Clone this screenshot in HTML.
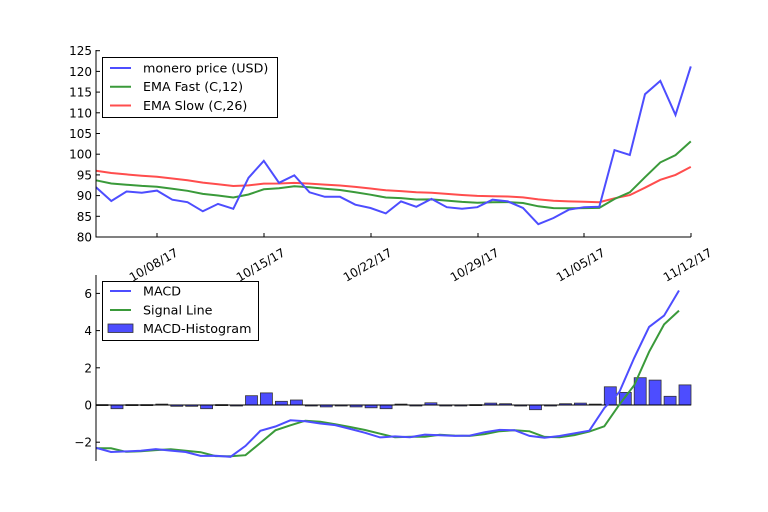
<!DOCTYPE html>
<html><head><meta charset="utf-8">
<style>
html,body{margin:0;padding:0;background:#fff;}
svg{display:block;font-family:"DejaVu Sans","Liberation Sans",sans-serif;}
</style></head>
<body>
<svg id="s" width="768" height="512" xmlns="http://www.w3.org/2000/svg"></svg>
<script>
var P=[92,88.7,91,90.7,91.2,89,88.4,86.2,88,86.8,94.3,98.4,93.1,94.9,90.8,89.7,89.7,87.8,87,85.7,88.6,87.3,89.2,87.2,86.8,87.2,89,88.6,87,83.1,84.6,86.6,87.2,87.3,101,99.8,114.5,117.7,109.5,121.2];
var H=[0.02,-0.2,0.02,0.02,0.05,-0.07,-0.07,-0.2,0.02,-0.03,0.5,0.65,0.2,0.27,-0.03,-0.1,-0.05,-0.1,-0.15,-0.2,0.05,-0.02,0.12,-0.02,-0.02,0.02,0.1,0.07,0,-0.25,-0.05,0.07,0.1,0.05,0.98,0.68,1.47,1.34,0.47,1.08];
var F=[93.7],S=[96.0],af=2/13,as=2/27;
for(var i=1;i<P.length;i++){F.push(F[i-1]+af*(P[i]-F[i-1]));S.push(S[i-1]+as*(P[i]-S[i-1]));}
var M=[],G=[];for(i=0;i<P.length;i++){M.push(F[i]-S[i]);G.push(F[i]-S[i]-H[i]);}
var h='';
function X(i){return 96+15.25*i;}
function Y(v){return 50.7+(125-v)*4.14;}
function pl(a,c,xf,yf){var p=[];for(var k=0;k<a.length;k++)p.push(xf(k).toFixed(1)+','+yf(a[k]).toFixed(1));return '<polyline fill="none" stroke="'+c+'" stroke-width="2" points="'+p.join(' ')+'"/>';}
var B='#4d4dff',Gc='#3a9a3a',R='#ff4d4d';
h+=pl(S,R,X,Y)+pl(F,Gc,X,Y)+pl(P,B,X,Y);
h+='<line x1="96" y1="50" x2="96" y2="237.5" stroke="#000"/><line x1="96" y1="237" x2="691" y2="237" stroke="#000"/>';
for(var v=80;v<=125;v+=5){var y=Y(v);h+='<line x1="96" x2="100" y1="'+y+'" y2="'+y+'" stroke="#000"/><text x="92" y="'+(y+4.5)+'" font-size="12" text-anchor="end">'+v+'</text>';}
var ticks=[[157,'10/08/17'],[264,'10/15/17'],[371,'10/22/17'],[478,'10/29/17'],[584,'11/05/17'],[691,'11/12/17']];
ticks.forEach(function(t){h+='<line x1="'+t[0]+'" x2="'+t[0]+'" y1="237" y2="233" stroke="#000"/><text font-size="12" text-anchor="end" transform="translate('+(t[0]+22)+',255) rotate(-30)">'+t[1]+'</text>';});
h+='<rect x="102.5" y="57.5" width="175" height="60" fill="#fff" stroke="#000"/>';
[[B,'monero price (USD)',68],[Gc,'EMA Fast (C,12)',86.7],[R,'EMA Slow (C,26)',105.5]].forEach(function(l){h+='<line x1="110" x2="131" y1="'+l[2]+'" y2="'+l[2]+'" stroke="'+l[0]+'" stroke-width="2"/><text x="143" y="'+(l[2]+4.5)+'" font-size="12.7">'+l[1]+'</text>';});
function X2(i){return 96+14.95*i;}
function Y2(v){return 405-v*18.6;}
for(i=0;i<H.length;i++){var d=H[i],x=X2(i),y0=Y2(Math.max(d,0)),hh=Math.abs(d)*18.6;h+='<rect x="'+x.toFixed(1)+'" y="'+y0.toFixed(1)+'" width="12" height="'+Math.max(hh,1).toFixed(1)+'" fill="#4d4dff" stroke="#333" stroke-width="0.8"/>';}
h+='<line x1="96" x2="691" y1="405" y2="405" stroke="#000"/>';
h+=pl(G,Gc,X2,Y2)+pl(M,B,X2,Y2);
h+='<line x1="96" y1="275" x2="96" y2="461" stroke="#000"/>';
[-2,0,2,4,6].forEach(function(v){var y=Y2(v);h+='<line x1="96" x2="100" y1="'+y+'" y2="'+y+'" stroke="#000"/><text x="92" y="'+(y+4.5)+'" font-size="12" text-anchor="end">'+(v<0?'\u2212'+(-v):v)+'</text>';});
h+='<rect x="102.5" y="281.5" width="156" height="59" fill="#fff" stroke="#000"/>';
h+='<line x1="110" x2="131" y1="291" y2="291" stroke="'+B+'" stroke-width="2"/><text x="143" y="295.5" font-size="12.7">MACD</text>';
h+='<line x1="110" x2="131" y1="310" y2="310" stroke="'+Gc+'" stroke-width="2"/><text x="143" y="314.5" font-size="12.7">Signal Line</text>';
h+='<rect x="108" y="324" width="25" height="8.5" fill="#4d4dff" stroke="#333" stroke-width="0.8"/><text x="143" y="333" font-size="12.7">MACD-Histogram</text>';
document.getElementById('s').innerHTML=h;
</script>
</body></html>
